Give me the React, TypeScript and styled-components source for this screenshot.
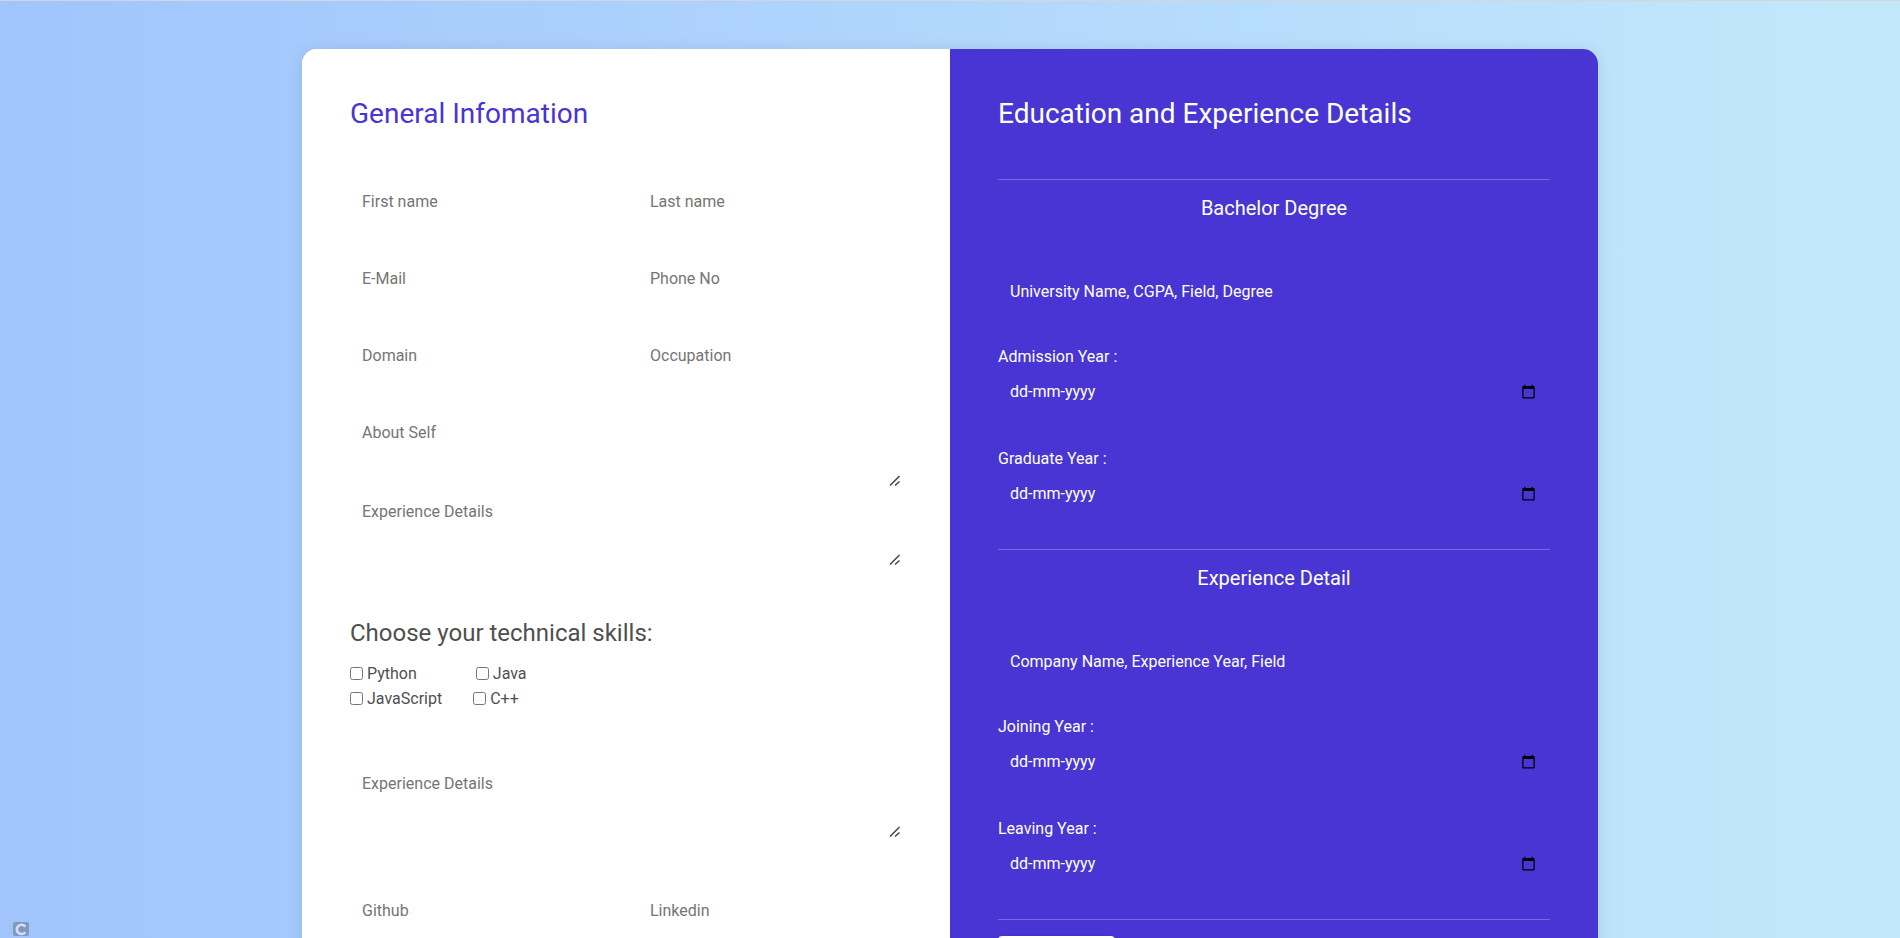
import React from 'react';
import styled, { createGlobalStyle } from 'styled-components';

const GlobalStyle = createGlobalStyle`
  *, *::before, *::after { box-sizing: border-box; }
  body {
    margin: 0;
    font-family: Roboto, "Liberation Sans", sans-serif;
    font-size: 16px;
    line-height: 26px;
    color: #4f4f4f;
  }
  input, textarea, button { font: inherit; margin: 0; }
`;

const Page = styled.main`
  height: 100vh;
  overflow-y: auto;
  scrollbar-width: none;
  padding: 48px 24px;
  border-top: 1px solid #d3d6dc;
  background: linear-gradient(to right, #a1c4fd, #c2e9fb);
`;

const Card = styled.form`
  display: grid;
  grid-template-columns: 1fr 1fr;
  max-width: 1296px;
  margin: 0 auto;
  border-radius: 15px;
  box-shadow: 0 2px 15px rgba(0, 0, 0, 0.1);
  background: #fff;
`;

const Panel = styled.section<{ $dark?: boolean }>`
  padding: 48px;
  color: ${(p) => (p.$dark ? '#fff' : '#4f4f4f')};
  background: ${(p) => (p.$dark ? '#4835d4' : '#fff')};
  border-radius: ${(p) => (p.$dark ? '0 15px 15px 0' : '15px 0 0 15px')};
`;

const Title = styled.h1<{ $accent?: boolean }>`
  margin: 0 0 48px;
  font-size: 28px;
  font-weight: 400;
  line-height: 34px;
  color: ${(p) => (p.$accent ? '#4835d4' : '#fff')};
`;

const Fields = styled.div`
  display: grid;
  grid-template-columns: 1fr 1fr;
  gap: 41px 24px;
  padding-top: 4px;
`;

const Control = styled.input`
  display: block;
  width: 100%;
  height: 36px;
  padding: 5px 12px;
  border: 0;
  outline: 0;
  background: transparent;
  color: inherit;
  &::placeholder { color: #757575; opacity: 1; }
`;

const LightControl = styled(Control)`
  &::placeholder { color: #fff; }
`;

const AreaBox = styled.div`
  position: relative;
`;

const TextArea = styled.textarea`
  display: block;
  width: 100%;
  height: 73px;
  padding: 5px 12px;
  border: 0;
  outline: 0;
  resize: none;
  background: transparent;
  color: inherit;
  &::placeholder { color: #757575; opacity: 1; }
`;

const Grip = styled.svg`
  position: absolute;
  right: 1px;
  bottom: 1px;
  pointer-events: none;
`;

const Areas = styled.div<{ $top: number; $bottom: number }>`
  display: grid;
  gap: 6px;
  padding: ${(p) => p.$top}px 0 ${(p) => p.$bottom}px;
`;

const Skills = styled.fieldset`
  margin: 0;
  padding: 0;
  border: 0;
`;

const SkillsTitle = styled.legend`
  padding: 0;
  margin-bottom: 13px;
  font-size: 24px;
  line-height: 30px;
`;

const SkillRow = styled.div<{ $gap: number }>`
  display: flex;
  gap: ${(p) => p.$gap}px;
`;

const Skill = styled.label`
  display: flex;
  align-items: center;
  gap: 4px;
  line-height: 25px;
  input { width: 13px; height: 13px; }
`;

const Heading = styled.h2`
  margin: 0 0 53px;
  font-size: 20px;
  font-weight: 400;
  line-height: 24px;
  text-align: center;
`;

const Divider = styled.hr`
  height: 1px;
  margin: 0 0 16px;
  border: 0;
  background: #7768e0;
`;

const DateField = styled.div`
  display: grid;
  gap: 3px;
  margin-bottom: 37px;
`;

const DateLabel = styled.label`
  line-height: 26px;
`;

const DateBox = styled.div`
  display: flex;
  align-items: center;
  padding-right: 14px;
`;

const PickerButton = styled.button`
  display: flex;
  padding: 0;
  border: 0;
  background: transparent;
  color: #000;
`;

const Block = styled.div`
  padding-bottom: 1px;
`;

const NameField = styled.div`
  margin-bottom: 35px;
`;

const Submit = styled.button`
  width: 117px;
  height: 44px;
  border: 0;
  border-radius: 4px;
  background: #fff;
  color: #4f4f4f;
  box-shadow: 0 2px 5px rgba(0, 0, 0, 0.2);
`;

const Badge = styled.svg`
  position: fixed;
  left: 13px;
  bottom: 2px;
`;

function CalendarIcon() {
  return (
    <svg width="15" height="15" viewBox="0 0 24 24" fill="currentColor" aria-hidden="true">
      <path d="M20 3h-1V1h-2v2H7V1H5v2H4c-1.1 0-2 .9-2 2v16c0 1.1.9 2 2 2h16c1.1 0 2-.9 2-2V5c0-1.1-.9-2-2-2zm0 18H4V8h16v13z" />
    </svg>
  );
}

function Area({ hint, label }: { hint: string; label: string }) {
  return (
    <AreaBox>
      <TextArea placeholder={hint} aria-label={label} />
      <Grip width="12" height="12" viewBox="0 0 12 12" aria-hidden="true">
        <path d="M1 10.5L10.5 1M6 10.5L10.5 6.5" fill="none" stroke="#4a4a4a" strokeWidth="1.6" />
      </Grip>
    </AreaBox>
  );
}

function YearField({ id, label }: { id: string; label: string }) {
  return (
    <DateField>
      <DateLabel htmlFor={id}>{label}</DateLabel>
      <DateBox>
        <LightControl id={id} type="text" placeholder="dd-mm-yyyy" />
        <PickerButton type="button" aria-label="Pick a date">
          <CalendarIcon />
        </PickerButton>
      </DateBox>
    </DateField>
  );
}

function HistoryBlock(props: { title: string; hint: string; from: string; to: string }) {
  return (
    <Block>
      <Divider />
      <Heading>{props.title}</Heading>
      <NameField>
        <LightControl placeholder={props.hint} aria-label={props.title} />
      </NameField>
      <YearField id={props.from} label={`${props.from} Year :`} />
      <YearField id={props.to} label={`${props.to} Year :`} />
    </Block>
  );
}

function Check({ name }: { name: string }) {
  return (
    <Skill>
      <input type="checkbox" />
      {name}
    </Skill>
  );
}

export default function App() {
  const fields = ['First name', 'Last name', 'E-Mail', 'Phone No', 'Domain', 'Occupation'];
  return (
    <>
      <GlobalStyle />
      <Page>
        <Card onSubmit={(e) => e.preventDefault()}>
          <Panel>
            <Title $accent>General Infomation</Title>
            <Fields>
              {fields.map((f) => (
                <Control key={f} placeholder={f} aria-label={f} />
              ))}
            </Fields>
            <Areas $top={42} $bottom={51}>
              <Area hint="About Self" label="About Self" />
              <Area hint="Experience Details" label="Experience Details" />
            </Areas>
            <Skills>
              <SkillsTitle>Choose your technical skills:</SkillsTitle>
              <SkillRow $gap={59}>
                <Check name="Python" />
                <Check name="Java" />
              </SkillRow>
              <SkillRow $gap={31}>
                <Check name="JavaScript" />
                <Check name="C++" />
              </SkillRow>
            </Skills>
            <Areas $top={55} $bottom={49}>
              <Area hint="Experience Details" label="Skill experience details" />
            </Areas>
            <Fields>
              <Control placeholder="Github" aria-label="Github" />
              <Control placeholder="Linkedin" aria-label="Linkedin" />
            </Fields>
          </Panel>
          <Panel $dark>
            <Title>Education and Experience Details</Title>
            <HistoryBlock
              title="Bachelor Degree"
              hint="University Name, CGPA, Field, Degree"
              from="Admission"
              to="Graduate"
            />
            <HistoryBlock
              title="Experience Detail"
              hint="Company Name, Experience Year, Field"
              from="Joining"
              to="Leaving"
            />
            <Divider />
            <Submit type="submit">Register</Submit>
          </Panel>
        </Card>
        <Badge width="16" height="14" viewBox="0 0 16 14" aria-hidden="true">
          <rect width="16" height="14" rx="2" fill="#8299bd" />
          <path d="M12.4 4.6A4.8 4.6 0 1 0 12.4 10.2" fill="none" stroke="#cfe0fb" strokeWidth="2.6" />
        </Badge>
      </Page>
    </>
  );
}
